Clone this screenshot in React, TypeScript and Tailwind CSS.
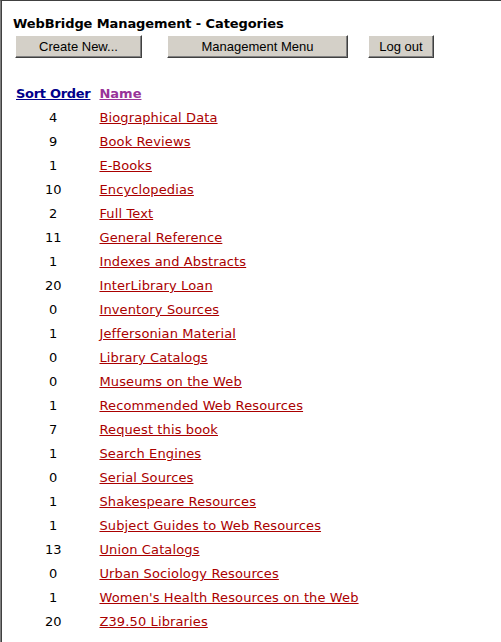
const rows: [number, string][] = [
  [4, 'Biographical Data'],
  [9, 'Book Reviews'],
  [1, 'E-Books'],
  [10, 'Encyclopedias'],
  [2, 'Full Text'],
  [11, 'General Reference'],
  [1, 'Indexes and Abstracts'],
  [20, 'InterLibrary Loan'],
  [0, 'Inventory Sources'],
  [1, 'Jeffersonian Material'],
  [0, 'Library Catalogs'],
  [0, 'Museums on the Web'],
  [1, 'Recommended Web Resources'],
  [7, 'Request this book'],
  [1, 'Search Engines'],
  [0, 'Serial Sources'],
  [1, 'Shakespeare Resources'],
  [1, 'Subject Guides to Web Resources'],
  [13, 'Union Catalogs'],
  [0, 'Urban Sociology Resources'],
  [1, "Women's Health Resources on the Web"],
  [20, 'Z39.50 Libraries'],
];

function Btn({ label, width }: { label: string; width: string }) {
  return (
    <button
      type="button"
      className={`${width} h-[23px] bg-[#d4d0c8] text-black text-[13px] leading-none border border-t-white border-l-white border-r-[#404040] border-b-[#404040] shadow-[inset_-1px_-1px_0_#808080] font-['Liberation_Sans',Arial,sans-serif]`}
    >
      {label}
    </button>
  );
}

export default function App() {
  return (
    <div className="w-[501px] h-[642px] bg-white border-l border-l-[#808080] border-t border-t-[#404040] overflow-hidden">
      <div className="h-full border-l border-l-[#404040] pl-[11px] pt-[15px] font-['DejaVu_Sans',Verdana,sans-serif] text-[13px] text-black">
        <h1 className="font-bold text-[13px] leading-[16px] tracking-[-0.1px]">WebBridge Management - Categories</h1>
        <div className="flex mt-[3px] ml-[2px]">
          <Btn label="Create New..." width="w-[127px]" />
          <div className="w-[25px]" />
          <Btn label="Management Menu" width="w-[181px]" />
          <div className="w-[20px]" />
          <Btn label="Log out" width="w-[66px]" />
        </div>
        <table className="mt-[23px] -ml-[3px] border-separate border-spacing-x-[3px] border-spacing-y-[2px]">
          <thead>
            <tr className="h-[22px]">
              <th className="px-[3px] text-center font-bold tracking-[-0.3px]">
                <a href="#" className="underline text-[#00008b]">Sort Order</a>
              </th>
              <th className="px-[3px] text-left font-bold">
                <a href="#" className="underline text-[#993399]">Name</a>
              </th>
            </tr>
          </thead>
          <tbody>
            {rows.map(([n, name]) => (
              <tr key={name} className="h-[22px]">
                <td className="px-[3px] text-center">{n}</td>
                <td className="px-[3px] text-left tracking-[0.12px]">
                  <a href="#" className="underline text-[#aa0000]">{name}</a>
                </td>
              </tr>
            ))}
          </tbody>
        </table>
      </div>
    </div>
  );
}
